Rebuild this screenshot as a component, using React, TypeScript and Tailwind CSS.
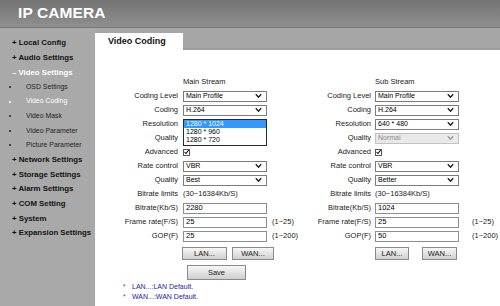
import React from 'react';

type Ctrl = React.ReactNode;

const navTop = [
  { label: 'Local Config', sign: '+' },
  { label: 'Audio Settings', sign: '+' },
];
const navSub = ['OSD Settings', 'Video Coding', 'Video Mask', 'Video Parameter', 'Picture Parameter'];
const navBottom = ['Network Settings', 'Storage Settings', 'Alarm Settings', 'COM Setting', 'System', 'Expansion Settings'];

function Chevron({ muted }: { muted?: boolean }) {
  return (
    <svg width="7" height="5" viewBox="0 0 7 5" className="absolute right-[4px] top-1/2 -translate-y-1/2">
      <polyline points="0.8,0.8 3.5,3.8 6.2,0.8" fill="none" stroke={muted ? '#9a9a9a' : '#222'} strokeWidth="1.4" />
    </svg>
  );
}

function Select({ value, disabled }: { value: string; disabled?: boolean }) {
  return (
    <div
      className={
        disabled
          ? 'relative flex h-[11px] w-[84px] items-center border border-[#c2c2c2] bg-[#e9e9e9] pl-[2px] text-[7px] text-[#8c8c8c]'
          : 'relative flex h-[11px] w-[84px] items-center border border-[#7c7c7c] bg-white pl-[2px] text-[7px] text-black'
      }
    >
      {value}
      <Chevron muted={disabled} />
    </div>
  );
}

function Input({ value }: { value: string }) {
  return (
    <div className="flex h-[11px] w-[84px] items-center border border-[#8e8e8e] bg-white pl-[2px] text-[7.5px] text-black">
      {value}
    </div>
  );
}

function Check() {
  return (
    <div className="flex h-[7px] w-[7px] items-center justify-center border border-[#555] bg-white">
      <svg width="6" height="6" viewBox="0 0 6 6">
        <polyline points="0.6,3 2.3,4.8 5.6,0.6" fill="none" stroke="#111" strokeWidth="1.3" />
      </svg>
    </div>
  );
}

// open listbox of the main Resolution select, lying over the Quality row below it
function ResolutionOpen() {
  return (
    <div className="relative h-[11px] w-[84px]">
      <div className="absolute left-0 top-0 z-10 h-[27px] w-[84px] border border-[#2a2a2a] bg-white text-[7px] leading-[8px] text-black">
        <div className="h-[8px] bg-[#3399ff] pl-[2px] text-white">1280 * 1024</div>
        <div className="h-[8px] pl-[2px]">1280 * 960</div>
        <div className="h-[8px] pl-[2px]">1280 * 720</div>
      </div>
    </div>
  );
}

function Row({ label, main, sub, mainHint, subHint }: { label: string; main: Ctrl; sub: Ctrl; mainHint?: string; subHint?: string }) {
  return (
    <div className="flex h-[14px] items-center text-[7.5px] text-[#222]">
      <div className="w-[83px] text-right">{label}</div>
      <div className="ml-[5px] w-[84px]">{main}</div>
      <div className="w-[33px] pl-[5px]">{mainHint}</div>
      <div className="w-[71px] text-right">{label}</div>
      <div className="ml-[4px] w-[84px]">{sub}</div>
      <div className="pl-[13px]">{subHint}</div>
    </div>
  );
}

function Btn({ children, className }: { children: React.ReactNode; className: string }) {
  return (
    <div
      className={
        'flex items-center justify-center border border-[#8a8a8a] bg-gradient-to-b from-[#f7f7f7] to-[#cfcfcf] text-[7.5px] text-[#222] ' +
        className
      }
    >
      {children}
    </div>
  );
}

export default function App() {
  return (
    <div className="flex h-[306px] w-[500px] flex-col overflow-hidden bg-[#a9a9a9] font-['Liberation_Sans',Arial,sans-serif]">
      <header className="h-[28px] shrink-0 border-b border-[#777] bg-gradient-to-b from-[#747474] to-[#8f8f8f] pl-[18px] pt-[5px]">
        <h1 className="text-[15.5px] font-bold leading-none tracking-[0.1px] text-white">IP CAMERA</h1>
      </header>

      <div className="flex flex-1">
        <aside className="w-[95px] shrink-0 pt-[8px]">
          {navTop.map((n) => (
            <div key={n.label} className="flex h-[14.6px] items-center pl-[12px] text-[7.8px] font-bold text-[#111]">
              + {n.label}
            </div>
          ))}
          <div className="flex h-[14.6px] items-center pl-[12px] text-[7.8px] font-bold text-white">– Video Settings</div>
          {navSub.map((s) => (
            <div
              key={s}
              className={
                'flex h-[14.6px] items-center pl-[9px] text-[6.9px] ' +
                (s === 'Video Coding' ? 'text-white' : 'text-[#222]')
              }
            >
              <span className="mr-[15px] h-[2px] w-[2px] rounded-full bg-current" />
              {s}
            </div>
          ))}
          {navBottom.map((n) => (
            <div key={n} className="flex h-[14.6px] items-center pl-[12px] text-[7.8px] font-bold text-[#111]">
              + {n}
            </div>
          ))}
        </aside>

        <main className="flex flex-1 flex-col">
          <div className="flex h-[22px] items-end bg-[#a6a6a6] shadow-[inset_0_-2px_0_#9c9c9c]">
            <div className="flex h-[17px] w-[88px] items-center bg-white pl-[13px] text-[9px] font-bold text-[#111]">
              Video Coding
            </div>
          </div>

          <div className="flex-1 bg-white pt-[25px]">
            <div className="flex h-[14px] items-center text-[7.5px] text-[#222]">
              <div className="ml-[88px] w-[84px]">Main Stream</div>
              <div className="ml-[108px]">Sub Stream</div>
            </div>
            <Row label="Coding Level" main={<Select value="Main Profile" />} sub={<Select value="Main Profile" />} />
            <Row label="Coding" main={<Select value="H.264" />} sub={<Select value="H.264" />} />
            <Row label="Resolution" main={<ResolutionOpen />} sub={<Select value="640 * 480" />} />
            <Row label="Quality" main={<Select value="" />} sub={<Select value="Normal" disabled />} />
            <Row label="Advanced" main={<Check />} sub={<Check />} />
            <Row label="Rate control" main={<Select value="VBR" />} sub={<Select value="VBR" />} />
            <Row label="Quality" main={<Select value="Best" />} sub={<Select value="Better" />} />
            <Row
              label="Bitrate limits"
              main={<span className="whitespace-nowrap">(30~16384Kb/S)</span>}
              sub={<span className="whitespace-nowrap">(30~16384Kb/S)</span>}
            />
            <Row label="Bitrate(Kb/S)" main={<Input value="2280" />} sub={<Input value="1024" />} />
            <Row label="Frame rate(F/S)" main={<Input value="25" />} sub={<Input value="25" />} mainHint="(1~25)" subHint="(1~25)" />
            <Row label="GOP(F)" main={<Input value="25" />} sub={<Input value="50" />} mainHint="(1~200)" subHint="(1~200)" />

            <div className="mt-[4px] flex h-[13px]">
              <Btn className="ml-[87px] w-[45px]">LAN...</Btn>
              <Btn className="ml-[5px] w-[42px]">WAN...</Btn>
              <Btn className="ml-[101px] w-[34px]">LAN...</Btn>
              <Btn className="ml-[13px] w-[35px]">WAN...</Btn>
            </div>

            <div className="mt-[5px] flex h-[15px]">
              <Btn className="ml-[92px] w-[59px]">Save</Btn>
            </div>

            <div className="mt-[2px] text-[7px] leading-[9.5px] text-[#1c1ca8]">
              <div className="flex pl-[28px]">
                <span className="w-[9px] text-[#e0203a]">*</span>LAN...:LAN Default.
              </div>
              <div className="flex pl-[28px]">
                <span className="w-[9px] text-[#e0203a]">*</span>WAN...:WAN Default.
              </div>
            </div>
          </div>
        </main>
      </div>
    </div>
  );
}
